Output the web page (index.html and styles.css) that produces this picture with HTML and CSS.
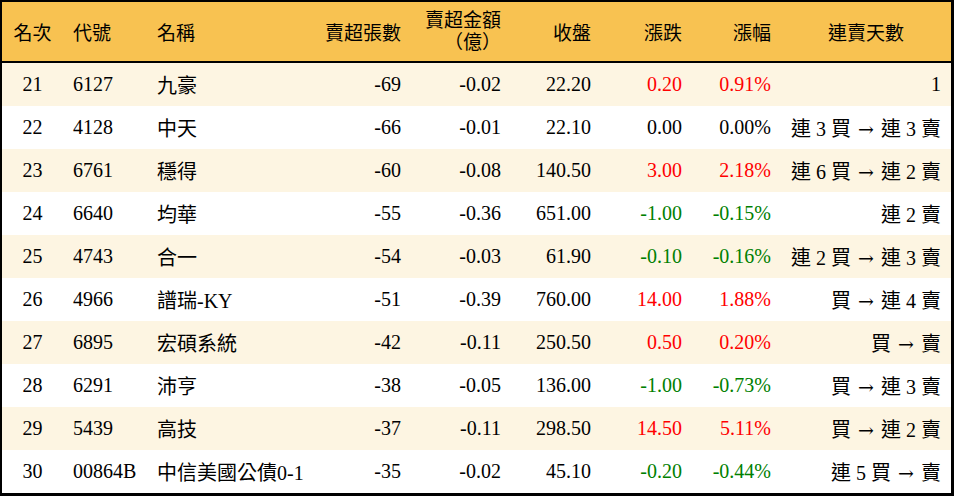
FILE: index.html
```html
<!DOCTYPE html>
<html lang="zh-Hant">
<head>
<meta charset="utf-8">
<title>賣超排行</title>
<link rel="stylesheet" href="styles.css">
</head>
<body>
<div class="board">
  <div class="row head">
    <div class="c center">名次</div>
    <div class="c">代號</div>
    <div class="c">名稱</div>
    <div class="c right">賣超張數</div>
    <div class="c right two">賣超金額<br>（億）</div>
    <div class="c right">收盤</div>
    <div class="c right">漲跌</div>
    <div class="c right">漲幅</div>
    <div class="c center">連賣天數</div>
  </div>
  <div class="row odd">
    <div class="c center">21</div><div class="c">6127</div><div class="c">九豪</div>
    <div class="c right">-69</div><div class="c right">-0.02</div><div class="c right">22.20</div>
    <div class="c right up">0.20</div><div class="c right up">0.91%</div><div class="c right">1</div>
  </div>
  <div class="row">
    <div class="c center">22</div><div class="c">4128</div><div class="c">中天</div>
    <div class="c right">-66</div><div class="c right">-0.01</div><div class="c right">22.10</div>
    <div class="c right">0.00</div><div class="c right">0.00%</div><div class="c right">連 3 買 <span class="arr">→</span> 連 3 賣</div>
  </div>
  <div class="row odd">
    <div class="c center">23</div><div class="c">6761</div><div class="c">穩得</div>
    <div class="c right">-60</div><div class="c right">-0.08</div><div class="c right">140.50</div>
    <div class="c right up">3.00</div><div class="c right up">2.18%</div><div class="c right">連 6 買 <span class="arr">→</span> 連 2 賣</div>
  </div>
  <div class="row">
    <div class="c center">24</div><div class="c">6640</div><div class="c">均華</div>
    <div class="c right">-55</div><div class="c right">-0.36</div><div class="c right">651.00</div>
    <div class="c right down">-1.00</div><div class="c right down">-0.15%</div><div class="c right">連 2 賣</div>
  </div>
  <div class="row odd">
    <div class="c center">25</div><div class="c">4743</div><div class="c">合一</div>
    <div class="c right">-54</div><div class="c right">-0.03</div><div class="c right">61.90</div>
    <div class="c right down">-0.10</div><div class="c right down">-0.16%</div><div class="c right">連 2 買 <span class="arr">→</span> 連 3 賣</div>
  </div>
  <div class="row">
    <div class="c center">26</div><div class="c">4966</div><div class="c">譜瑞-KY</div>
    <div class="c right">-51</div><div class="c right">-0.39</div><div class="c right">760.00</div>
    <div class="c right up">14.00</div><div class="c right up">1.88%</div><div class="c right">買 <span class="arr">→</span> 連 4 賣</div>
  </div>
  <div class="row odd">
    <div class="c center">27</div><div class="c">6895</div><div class="c">宏碩系統</div>
    <div class="c right">-42</div><div class="c right">-0.11</div><div class="c right">250.50</div>
    <div class="c right up">0.50</div><div class="c right up">0.20%</div><div class="c right">買 <span class="arr">→</span> 賣</div>
  </div>
  <div class="row">
    <div class="c center">28</div><div class="c">6291</div><div class="c">沛亨</div>
    <div class="c right">-38</div><div class="c right">-0.05</div><div class="c right">136.00</div>
    <div class="c right down">-1.00</div><div class="c right down">-0.73%</div><div class="c right">買 <span class="arr">→</span> 連 3 賣</div>
  </div>
  <div class="row odd">
    <div class="c center">29</div><div class="c">5439</div><div class="c">高技</div>
    <div class="c right">-37</div><div class="c right">-0.11</div><div class="c right">298.50</div>
    <div class="c right up">14.50</div><div class="c right up">5.11%</div><div class="c right">買 <span class="arr">→</span> 連 2 賣</div>
  </div>
  <div class="row">
    <div class="c center">30</div><div class="c">00864B</div><div class="c">中信美國公債0-1</div>
    <div class="c right">-35</div><div class="c right">-0.02</div><div class="c right">45.10</div>
    <div class="c right down">-0.20</div><div class="c right down">-0.44%</div><div class="c right">連 5 買 <span class="arr">→</span> 賣</div>
  </div>
</div>
</body>
</html>
```
FILE: styles.css
```css
html, body {
  margin: 0;
  padding: 0;
  background: #fff;
}
body {
  font-family: "Liberation Serif", "Noto Sans CJK TC", serif;
  font-size: 20px;
  color: #000;
}
.board {
  width: 954px;
  height: 496px;
  box-sizing: border-box;
  border-style: solid;
  border-color: #000;
  border-width: 2px 3px 3px 2px;
  display: flex;
  flex-direction: column;
}
.row {
  display: grid;
  grid-template-columns: 61px 84px 164px 100px 100px 90px 91px 89px 170px;
  height: 43px;
  align-items: center;
  background: #fff;
}
.row.odd {
  background: #fdf5e2;
}
.row.head {
  height: 59px;
  background: #f8c251;
  border-bottom: 2px solid #000;
  font-size: 19px;
}
.row:last-child {
  height: 42px;
}
.c {
  padding: 0 10px;
  white-space: nowrap;
}
.center { text-align: center; }
.right { text-align: right; }
.two {
  line-height: 22px;
}
.arr {
  font-family: "DejaVu Serif", serif;
  font-size: 19px;
  margin: 0 2px;
}
.up { color: #ff0000; }
.down { color: #008000; }
```
